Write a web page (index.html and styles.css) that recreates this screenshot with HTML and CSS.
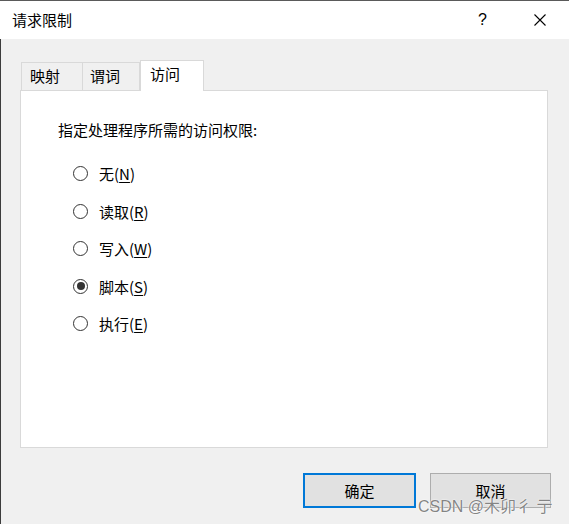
FILE: index.html
```html
<!DOCTYPE html>
<html lang="zh-CN">
<head>
<meta charset="utf-8">
<title>请求限制</title>
<link rel="stylesheet" href="styles.css">
</head>
<body>
<div class="window">
  <div class="titlebar">
    <span class="title">请求限制</span>
    <span class="tb-btn help">?</span>
    <span class="tb-btn close">
      <svg width="12" height="12" viewBox="0 0 12 12"><path d="M0.5 0.5 L11.5 11.5 M11.5 0.5 L0.5 11.5" stroke="#000" stroke-width="1.1" fill="none"/></svg>
    </span>
  </div>
  <div class="client">
    <div class="tabs">
      <div class="tab">映射</div>
      <div class="tab">谓词</div>
      <div class="tab active">访问</div>
    </div>
    <div class="panel">
      <p class="prompt">指定处理程序所需的访问权限:</p>
      <ul class="options">
        <li class="option"><span class="radio"></span><span class="label">无(<u>N</u>)</span></li>
        <li class="option"><span class="radio"></span><span class="label">读取(<u>R</u>)</span></li>
        <li class="option"><span class="radio"></span><span class="label">写入(<u>W</u>)</span></li>
        <li class="option"><span class="radio checked"></span><span class="label">脚本(<u>S</u>)</span></li>
        <li class="option"><span class="radio"></span><span class="label">执行(<u>E</u>)</span></li>
      </ul>
    </div>
    <div class="buttons">
      <button class="btn btn-default">确定</button>
      <button class="btn btn-cancel">取消</button>
    </div>
  </div>
  <div class="watermark">CSDN @木卯彳 亍</div>
</div>
</body>
</html>
```
FILE: styles.css
```css
html, body {
  margin: 0;
  padding: 0;
}
body {
  width: 569px;
  height: 524px;
  overflow: hidden;
  background: #f0f0f0;
  font-family: "Noto Sans CJK SC", "Microsoft YaHei", sans-serif;
  font-size: 15px;
  color: #000;
}
.window {
  position: relative;
  height: 524px;
  box-sizing: border-box;
  border-top: 1px solid #5a5a5a;
  display: flex;
  flex-direction: column;
}
.titlebar {
  height: 38px;
  background: #fff;
  display: flex;
  align-items: center;
}
.title {
  flex: 1;
  padding-left: 12px;
  line-height: 20px;
}
.tb-btn {
  width: 57px;
  height: 38px;
  display: flex;
  align-items: center;
  justify-content: center;
}
.help {
  font-family: "Liberation Sans", sans-serif;
  font-size: 16px;
  font-weight: normal;
}
.close {
  margin-right: 1px;
}
.client {
  flex: 1;
  border-left: 1px solid #3c3c3c;
  padding: 21px 18px 0 19px;
  display: flex;
  flex-direction: column;
}
.tabs {
  display: flex;
  align-items: flex-end;
  height: 30px;
  padding-left: 1px;
}
.tab {
  box-sizing: border-box;
  height: 28px;
  line-height: 25px;
  padding-left: 7px;
  border: 1px solid #d9d9d9;
  border-bottom: none;
  background: #f0f0f0;
}
.tab:nth-child(1) {
  width: 61px;
  border-right: none;
  padding-left: 8px;
}
.tab:nth-child(2) {
  width: 58px;
}
.tab.active {
  position: relative;
  z-index: 1;
  width: 64px;
  height: 31px;
  margin-bottom: -1px;
  line-height: 26px;
  padding-left: 9px;
  background: #fff;
}
.panel {
  box-sizing: border-box;
  width: 528px;
  height: 358px;
  border: 1px solid #d9d9d9;
  background: #fff;
  padding: 29px 0 0 37px;
}
.prompt {
  margin: 0;
  line-height: 20px;
}
.options {
  list-style: none;
  margin: 15px 0 0 0;
  padding: 0;
}
.option {
  display: flex;
  align-items: center;
  height: 37.5px;
}
.radio {
  box-sizing: border-box;
  width: 15px;
  height: 15px;
  margin-left: 15px;
  margin-right: 11px;
  border: 1px solid #333;
  border-radius: 50%;
  display: flex;
  align-items: center;
  justify-content: center;
}
.radio.checked::after {
  content: "";
  width: 8px;
  height: 8px;
  border-radius: 50%;
  background: #333;
}
.label u {
  text-underline-offset: 2px;
}
.buttons {
  display: flex;
  justify-content: flex-end;
  gap: 14px;
  margin-top: 25px;
}
.btn {
  box-sizing: border-box;
  height: 35px;
  background: #e1e1e1;
  font-family: inherit;
  font-size: 15px;
  color: #000;
  padding: 0;
}
.btn-default {
  width: 113px;
  border: 2px solid #0078d7;
}
.btn-cancel {
  width: 121px;
  border: 1px solid #adadad;
}
.watermark {
  position: absolute;
  left: 418px;
  top: 497px;
  font-family: "Liberation Sans", "Noto Sans CJK SC", sans-serif;
  font-size: 16px;
  line-height: 18px;
  color: rgba(110, 110, 110, 0.85);
  text-shadow: 0 0 2px #fff, 0 0 1px #fff;
  white-space: nowrap;
}
```
